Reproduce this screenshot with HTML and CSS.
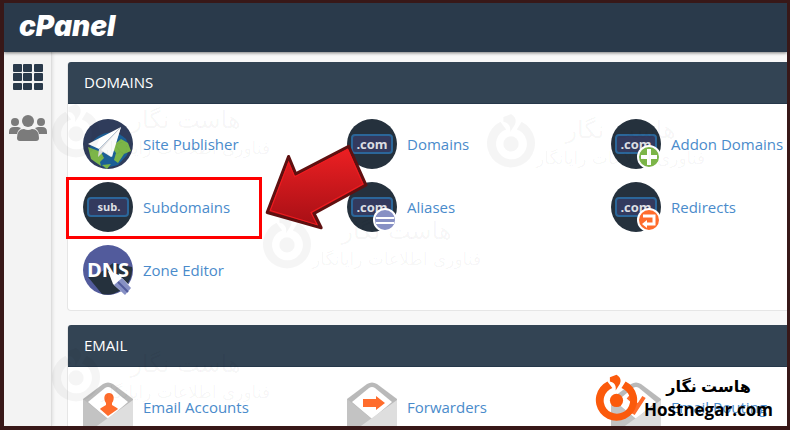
FILE: index.html
```
<!DOCTYPE html>
<html lang="en">
<head>
  <meta charset="UTF-8">
  <title>cPanel</title>
  <link rel="stylesheet" href="styles.css">
</head>
<body>

  <!-- Shared shapes -->
  <svg class="defs" width="0" height="0">
    <symbol id="ring" viewBox="0 0 52 56">
      <path d="M15 8 A25 25 0 1 0 37 8 L32 16 A16 16 0 1 1 21 16 Z" fill="currentColor"/>
      <circle cx="26" cy="31" r="8" fill="currentColor"/>
      <path d="M18 3 L26 0 C31 3 32 7 30 11 L25 19 C26 12 23 9 18 8 Z" fill="currentColor"/>
    </symbol>
    <symbol id="envelope" viewBox="0 0 50 60">
      <path d="M0 17 L20 2 Q25 -1 30 2 L50 17 V60 H0 Z" fill="#b9b9b9"/>
      <path d="M5 20 L22 6 Q25 4 28 6 L45 20 L25 37 Z" fill="#fff"/>
      <path d="M0 17 L25 37 L0 56 Z" fill="#c3c3c3"/>
      <path d="M50 18 V60 H0 V54 Z" fill="#dedede"/>
    </symbol>
    <symbol id="domain" viewBox="0 0 50 50">
      <circle cx="25" cy="25" r="25" fill="#25313d"/>
      <rect x="5" y="16" width="40" height="18" rx="3" fill="#333a5e" stroke="#2b6699" stroke-width="2"/>
    </symbol>
  </svg>

  <header class="topbar">
    <a class="logo" href="#">cPanel</a>
  </header>

  <div class="layout">
    <nav class="sidebar">
      <a href="#" aria-label="Home">
        <svg width="30" height="26" viewBox="0 0 30 26" fill="#2a3a4b">
          <rect x="0" y="0" width="9" height="8" rx="1"/><rect x="10" y="0" width="9" height="8" rx="1"/><rect x="21" y="0" width="9" height="8" rx="1"/>
          <rect x="0" y="9" width="9" height="8" rx="1"/><rect x="10" y="9" width="9" height="8" rx="1"/><rect x="21" y="9" width="9" height="8" rx="1"/>
          <rect x="0" y="19" width="9" height="7" rx="1"/><rect x="10" y="19" width="9" height="7" rx="1"/><rect x="21" y="19" width="9" height="7" rx="1"/>
        </svg>
      </a>
      <a href="#" aria-label="Users">
        <svg width="38" height="28" viewBox="0 0 38 28" fill="#7b7b7b">
          <circle cx="6" cy="8" r="4"/><circle cx="32" cy="8" r="4"/>
          <path d="M0 20 V18 Q0 13 5 13 H9 L12 14 Q9 16 8 20 Z"/>
          <path d="M38 20 V18 Q38 13 33 13 H29 L26 14 Q29 16 30 20 Z"/>
          <circle cx="19" cy="7" r="6"/>
          <path d="M8 24 Q8 15 15 15 Q19 17 23 15 Q30 15 30 24 Q30 27 27 27 H11 Q8 27 8 24 Z"/>
        </svg>
      </a>
    </nav>

    <main class="content">
      <section class="panel">
        <h2>DOMAINS</h2>
        <div class="items">
          <a class="item" href="#">
            <svg class="icon" viewBox="0 0 50 50">
              <circle cx="25" cy="25" r="25" fill="#2f3c5b"/>
              <path d="M6 31 A22 22 0 0 1 43 20 L46 27 L44 36 L35 46 L22 49 L12 43 Z" fill="#1c5f96"/>
              <path d="M5 28 L18 33 L21 39 L17 43 L18 47 L8 40 Z M32 25 L38 20 L45 24 L48 32 L41 35 L35 44 L31 41 L33 34 L30 30 Z M19 46 L28 45 L24 50 Z" fill="#7cb548"/>
              <path d="M38 8 L5 25 L16 30 Z" fill="#fff"/>
              <path d="M38 8 L16 30 L15 38 L20 33 L28 38 Z" fill="#dcdcdf"/>
              <path d="M38 8 L18 31 L29 38 Z" fill="#fafafa"/>
            </svg>
            <span>Site Publisher</span>
          </a>
          <a class="item" href="#">
            <svg class="icon" viewBox="0 0 50 50">
              <use href="#domain"/>
              <text class="icon-text" x="25" y="30">.com</text>
            </svg>
            <span>Domains</span>
          </a>
          <a class="item" href="#">
            <svg class="icon" viewBox="0 0 50 50">
              <use href="#domain"/>
              <text class="icon-text" x="25" y="30">.com</text>
              <circle cx="38" cy="38" r="11" fill="#7cb548" stroke="#fff" stroke-width="2"/>
              <path d="M38 30 V46 M30 38 H46" stroke="#fff" stroke-width="4"/>
            </svg>
            <span>Addon Domains</span>
          </a>
          <a class="item highlighted" href="#">
            <svg class="icon" viewBox="0 0 50 50">
              <use href="#domain"/>
              <text class="icon-text small" x="26" y="29">sub.</text>
            </svg>
            <span>Subdomains</span>
          </a>
          <a class="item" href="#">
            <svg class="icon" viewBox="0 0 50 50">
              <use href="#domain"/>
              <text class="icon-text" x="25" y="30">.com</text>
              <circle cx="38" cy="38" r="11" fill="#8790c4" stroke="#fff" stroke-width="2"/>
              <path d="M29 36 H47 M29 41 H47" stroke="#fff" stroke-width="2"/>
            </svg>
            <span>Aliases</span>
          </a>
          <a class="item" href="#">
            <svg class="icon" viewBox="0 0 50 50">
              <use href="#domain"/>
              <text class="icon-text" x="25" y="30">.com</text>
              <circle cx="38" cy="38" r="11" fill="#ff6c2c" stroke="#fff" stroke-width="2"/>
              <path d="M32 34 H43 V42 H35" fill="none" stroke="#fff" stroke-width="3"/>
              <path d="M31 42 L36 38 V46 Z" fill="#fff"/>
            </svg>
            <span>Redirects</span>
          </a>
          <a class="item" href="#">
            <svg class="icon" viewBox="0 0 50 50">
              <circle cx="25" cy="25" r="25" fill="#525b9c"/>
              <path d="M5 32 L14 30 L30 18 L49 22 A25 25 0 0 1 19 49 Z" fill="#25313d"/>
              <text class="icon-text dns" x="25" y="32">DNS</text>
              <path d="M25 26 L36 30 L49 43 L42 50 L30 39 Z" fill="#fff"/>
              <path d="M31 40 L39 33 L48 43 L42 50 Z" fill="#8790c4"/>
              <path d="M35 37 L45 47" stroke="#525b9c" stroke-width="2"/>
            </svg>
            <span>Zone Editor</span>
          </a>
        </div>
      </section>

      <section class="panel">
        <h2>EMAIL</h2>
        <div class="items">
          <a class="item" href="#">
            <svg class="icon" viewBox="0 0 50 50">
              <use href="#envelope" width="50" height="60"/>
              <path d="M26 11 C31 11 32 17 29 21 V23 L34 26 L35 27 L25 34 L17 27 L18 26 L23 23 V21 C20 17 21 11 26 11 Z" fill="#ff6c2c"/>
            </svg>
            <span>Email Accounts</span>
          </a>
          <a class="item" href="#">
            <svg class="icon" viewBox="0 0 50 50">
              <use href="#envelope" width="50" height="60"/>
              <path d="M16 17 H29 V14 L38 21 L29 28 V25 H16 Z" fill="#ff6c2c"/>
            </svg>
            <span>Forwarders</span>
          </a>
          <a class="item" href="#">
            <svg class="icon" viewBox="0 0 50 50">
              <use href="#envelope" width="50" height="60"/>
              <path d="M17 15 L27 24 M33 15 L22 32" fill="none" stroke="#ff6c2c" stroke-width="4"/>
            </svg>
            <span>Email Routing</span>
          </a>
        </div>
      </section>
    </main>
  </div>

  <!-- Watermarks -->
  <div class="watermark mark-1" lang="fa">
    <svg><use href="#ring"/></svg>
    <div><p class="name">هاست نگار</p><p>فناوری اطلاعات رایانگار</p></div>
  </div>
  <div class="watermark mark-2" lang="fa">
    <svg><use href="#ring"/></svg>
    <div><p class="name">هاست نگار</p><p>فناوری اطلاعات رایانگار</p></div>
  </div>
  <div class="watermark mark-3" lang="fa">
    <svg><use href="#ring"/></svg>
    <div><p class="name">هاست نگار</p><p>فناوری اطلاعات رایانگار</p></div>
  </div>
  <div class="watermark mark-4" lang="fa">
    <svg><use href="#ring"/></svg>
    <div><p class="name">هاست نگار</p><p>فناوری اطلاعات رایانگار</p></div>
  </div>

  <!-- Arrow pointing at Subdomains -->
  <svg class="arrow" viewBox="0 0 110 90">
    <defs>
      <linearGradient id="red" x1="0" y1="0" x2="0" y2="1">
        <stop offset="0" stop-color="#ee2023"/>
        <stop offset="1" stop-color="#a50f15"/>
      </linearGradient>
    </defs>
    <path d="M11 73 L32 18 L39 35 L91 8 L108 46 L57 74 L64 88 Z" fill="url(#red)" stroke="#5f1010" stroke-width="3" stroke-linejoin="round"/>
    <path d="M14 71 L32 24 L38 38 L90 11 L105 45 L54 73 L60 85 Z" fill="none" stroke="#f01c20" stroke-width="1"/>
  </svg>

  <div class="brand">
    <svg><use href="#ring"/></svg>
    <div><p class="name" lang="fa">هاست نگار</p><p>Hostnegar.com</p></div>
  </div>

</body>
</html>
```

FILE: styles.css
```
*, *::after {
  box-sizing: border-box;
}

body {
  position: relative;
  display: flex;
  flex-direction: column;
  height: 100vh;
  margin: 0;
  overflow: hidden;
  border: 3px solid #381818;
  border-width: 3px 3px 4px 4px;
  background: #f8f8f8;
  font-family: "Open Sans", "DejaVu Sans", sans-serif;
  font-size: 15px;
}

p, h2 {
  margin: 0;
}

a {
  color: #4a8bcb;
  text-decoration: none;
}

.defs {
  position: absolute;
}

.topbar {
  position: relative;
  flex: none;
  display: flex;
  align-items: center;
  height: 49px;
  padding: 0 15px 4px;
  background: #2a3a4b;
  box-shadow: 0 1px 3px rgba(0, 0, 0, 0.5);
}

.logo {
  color: #fff;
  font-family: Inter, sans-serif;
  font-size: 28px;
  font-style: italic;
  font-weight: 900;
  line-height: 40px;
}

.layout {
  flex: 1;
  display: flex;
  min-height: 0;
}

.sidebar {
  flex: none;
  display: flex;
  flex-direction: column;
  align-items: center;
  gap: 24px;
  width: 48px;
  padding-top: 12px;
  background: #f3f3f3;
  border-right: 1px solid #ddd;
  box-shadow: 0 0 4px rgba(0, 0, 0, 0.15);
}

.sidebar svg {
  display: block;
}

.content {
  flex: 1;
  min-width: 0;
  padding: 10px 0 0 15px;
}

.panel {
  margin-bottom: 14px;
  background: #fff;
  border: 1px solid #e6e6e6;
  border-width: 0 0 1px 1px;
  border-radius: 4px 0 0 4px;
}

.panel h2 {
  padding: 0 16px;
  background: #334454;
  border-bottom: 1px solid #26384a;
  border-radius: 3px 0 0 0;
  color: #fff;
  font-size: 15px;
  font-weight: 400;
  line-height: 41px;
}

.items {
  display: grid;
  grid-template-columns: 3fr 3fr 2fr;
  gap: 13px 0;
  padding: 15px 0 15px 15px;
}

.item {
  position: relative;
  display: flex;
  align-items: center;
  gap: 10px;
  white-space: nowrap;
}

.icon {
  flex: none;
  width: 50px;
  height: 50px;
}

.icon-text {
  fill: #dcdfe3;
  font-size: 13px;
  font-weight: 700;
  text-anchor: middle;
}

.icon-text.small {
  font-size: 11px;
}

.icon-text.dns {
  fill: #fff;
  font-size: 20px;
}

.highlighted::after {
  content: "";
  position: absolute;
  top: -5px;
  bottom: -7px;
  left: -17px;
  width: 196px;
  border: 3px solid #f00;
}

.watermark {
  position: absolute;
  display: flex;
  color: rgba(0, 0, 0, 0.04);
  font-family: "DejaVu Sans", sans-serif;
  font-size: 17px;
  line-height: 24px;
  text-align: center;
  white-space: nowrap;
  pointer-events: none;
}

.watermark svg {
  width: 50px;
  height: 54px;
}

.watermark .name {
  font-size: 24px;
  line-height: 32px;
}

.mark-1 {
  top: 101px;
  left: 47px;
}

.mark-2 {
  top: 212px;
  left: 258px;
}

.mark-3 {
  top: 111px;
  left: 482px;
}

.mark-4 {
  top: 345px;
  left: 47px;
}

.arrow {
  position: absolute;
  top: 135px;
  left: 252px;
  width: 112px;
  height: 92px;
}

.brand {
  position: absolute;
  right: 14px;
  bottom: 4px;
  display: flex;
  align-items: center;
  gap: 6px;
  color: #000;
  font-size: 17px;
  font-weight: 700;
  line-height: 24px;
  text-align: center;
}

.brand .name {
  font-size: 16px;
}

.brand svg {
  width: 43px;
  height: 48px;
  color: #fb5a0c;
}
```
